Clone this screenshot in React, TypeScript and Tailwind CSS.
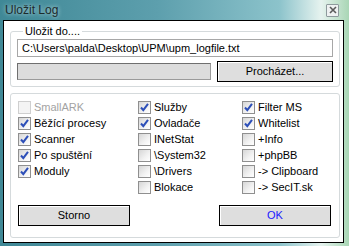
import React from 'react';

type Item = { label: string; checked?: boolean; disabled?: boolean };

const columns: Item[][] = [
  [
    { label: 'SmallARK', disabled: true },
    { label: 'Běžící procesy', checked: true },
    { label: 'Scanner', checked: true },
    { label: 'Po spuštění', checked: true },
    { label: 'Moduly', checked: true },
  ],
  [
    { label: 'Služby', checked: true },
    { label: 'Ovladače', checked: true },
    { label: 'INetStat' },
    { label: '\\System32' },
    { label: '\\Drivers' },
    { label: 'Blokace' },
  ],
  [
    { label: 'Filter MS', checked: true },
    { label: 'Whitelist', checked: true },
    { label: '+Info' },
    { label: '+phpBB' },
    { label: '-> Clipboard' },
    { label: '-> SecIT.sk' },
  ],
];

function CheckBox({ label, checked, disabled }: Item) {
  return (
    <div className="h-[16px] flex items-center gap-[3px]">
      <span
        className={`w-[13px] h-[13px] shrink-0 flex items-center justify-center border ${
          disabled
            ? 'border-[#cfcfcf] bg-[#f4f4f4]'
            : 'border-[#8f8f8f] bg-[linear-gradient(135deg,#d6d6d6_0%,#f2f2f2_60%,#ffffff_100%)]'
        }`}
      >
        {checked && (
          <svg width="11" height="11" viewBox="0 0 11 11">
            <path d="M2 5.5 L4.3 8.2 L9 1.8" fill="none" stroke="#2d4fb8" strokeWidth="2" />
          </svg>
        )}
      </span>
      <span className={disabled ? 'text-[#a3a3a3]' : 'text-black'}>{label}</span>
    </div>
  );
}

export default function App() {
  return (
    <div className="w-[349px] h-[246px] flex flex-col overflow-hidden bg-[linear-gradient(90deg,#3f8896_0%,#5d9fad_45%,#8cc3cb_80%,#e6f3ef_92%,#a9d6b5_100%)] font-['Liberation_Sans',Arial,sans-serif] text-[11px]">
      {/* title bar */}
      <div className="h-[20px] shrink-0 flex items-center justify-between pl-[5px] pr-[10px]">
        <span className="text-[12px] text-[#1c2a2c] [text-shadow:0_0_4px_#cfe8ec]">Uložit Log</span>
        <span className="w-[13px] h-[13px] flex items-center justify-center border border-[#8d9a9c] bg-[#eef1f1] rounded-[1px]">
          <svg width="8" height="8" viewBox="0 0 8 8">
            <path d="M1 1 L7 7 M7 1 L1 7" stroke="#5a5a5a" strokeWidth="1.6" />
          </svg>
        </span>
      </div>

      {/* body */}
      <div className="flex-1 ml-[3px] mr-[5px] mb-[3px] border border-black bg-white flex flex-col pl-[6px] pr-[3px] pt-[4px] pb-[4px]">
        <fieldset className="border border-[#d5dadc] rounded-[3px] px-[6px] pb-[4px]">
          <legend className="ml-[6px] px-[2px] leading-[13px]">Uložit do....</legend>
          <div className="mt-[1px] h-[18px] border border-[#a7a7a7] flex items-center pl-[4px]">
            C:\Users\palda\Desktop\UPM\upm_logfile.txt
          </div>
          <div className="mt-[4px] h-[21px] flex items-center gap-[6px]">
            <div className="w-[194px] h-[17px] bg-[#dcdcdc] border border-[#6f6f6f] border-b-[#9a9a9a] border-r-[#9a9a9a]" />
            <button className="flex-1 h-[21px] bg-[#dedede] border border-black shadow-[inset_1px_1px_0_#ffffff] text-black">
              Procházet...
            </button>
          </div>
        </fieldset>

        <div className="mt-[6px] flex-1 border border-[#d5dadc] rounded-[3px] pl-[7px] pr-[8px] pt-[5px] flex flex-col">
          <div className="grid grid-cols-[120px_104px_1fr]">
            {columns.map((col, i) => (
              <div key={i} className="flex flex-col">
                {col.map((it) => (
                  <CheckBox key={it.label} {...it} />
                ))}
              </div>
            ))}
          </div>
          <div className="mt-[10px] flex justify-between">
            <button className="w-[112px] h-[21px] bg-[#dedede] border border-black shadow-[inset_1px_1px_0_#ffffff] text-black">
              Storno
            </button>
            <button className="w-[112px] h-[21px] bg-[#dedede] border border-black shadow-[inset_1px_1px_0_#ffffff] text-[#1a1aff]">
              OK
            </button>
          </div>
        </div>
      </div>
    </div>
  );
}
